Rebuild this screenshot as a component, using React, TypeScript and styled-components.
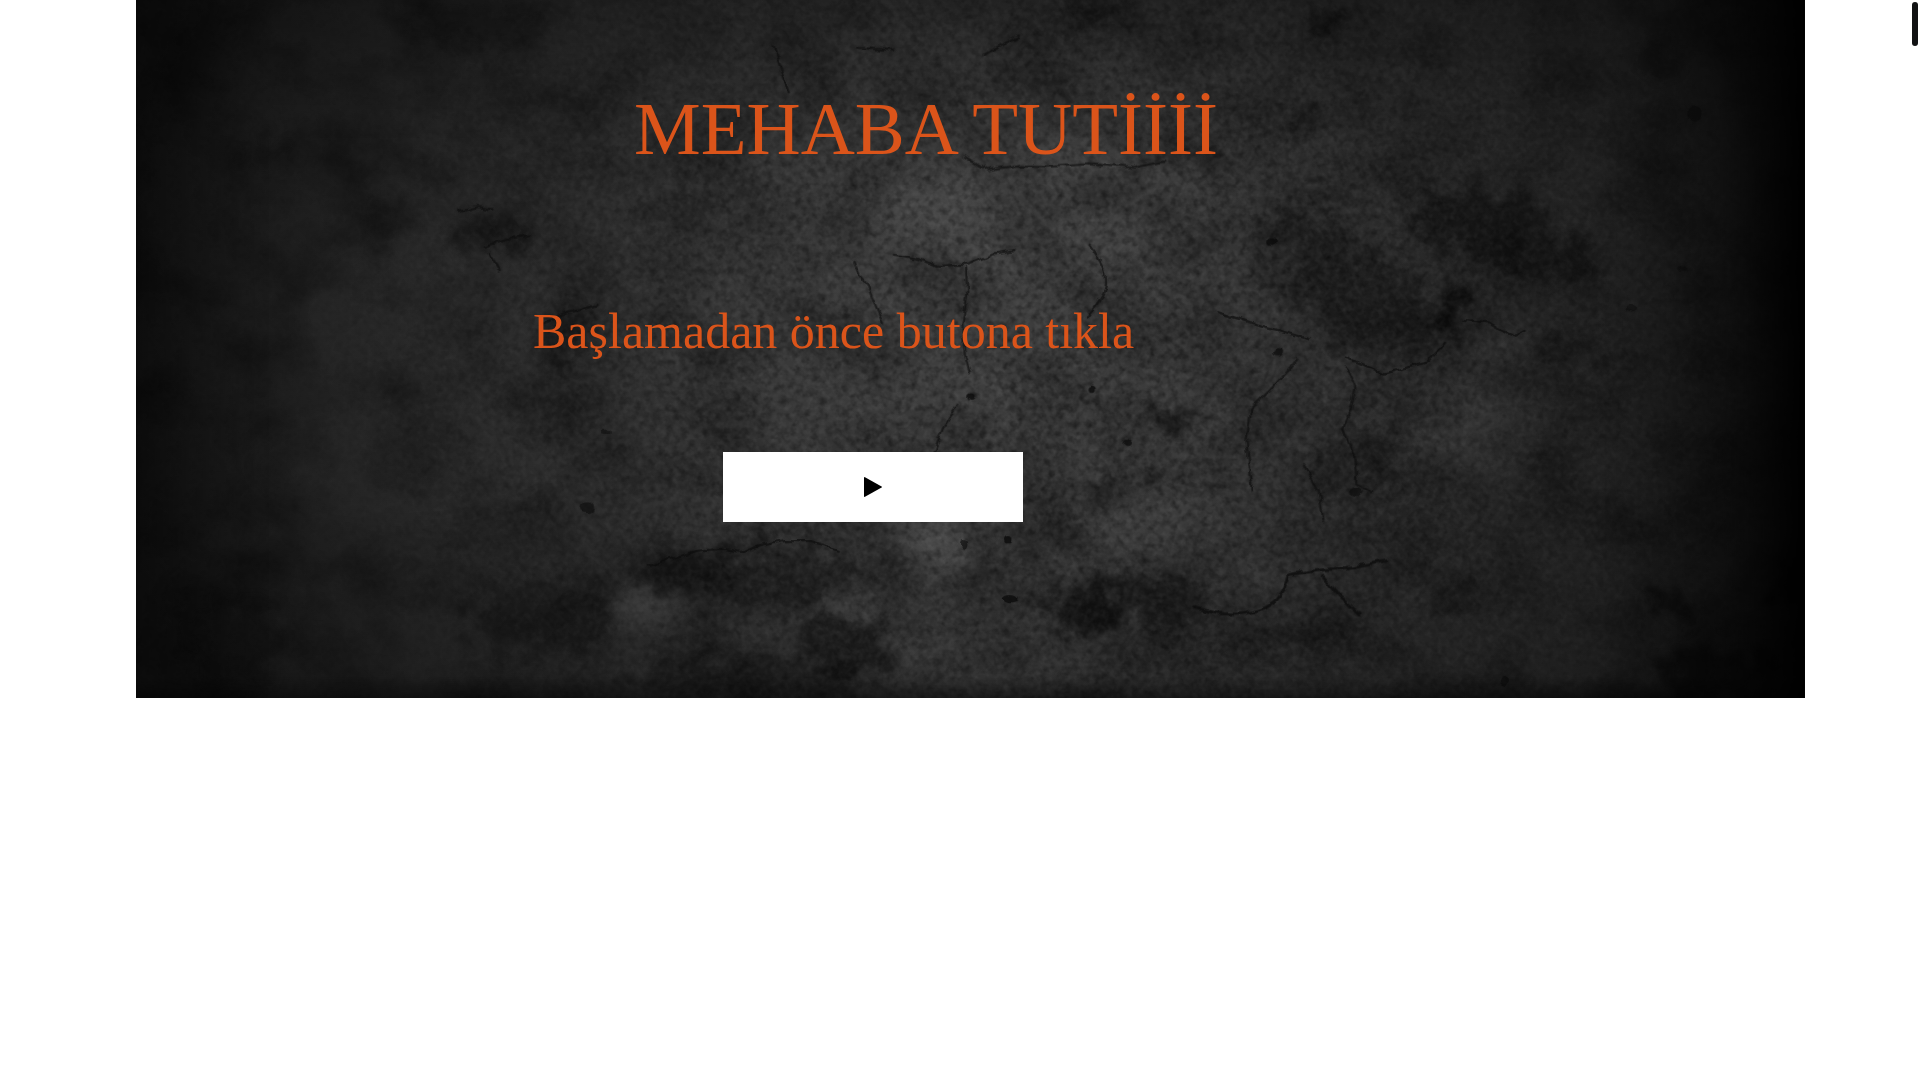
import React from "react";
import styled, { createGlobalStyle } from "styled-components";

const GlobalStyle = createGlobalStyle`
  * { box-sizing: border-box; }
  body {
    margin: 0;
    background: #fff;
    font-family: "Liberation Serif", "Times New Roman", serif;
  }
`;

const Page = styled.div`
  min-height: 100vh;
`;

const Hero = styled.main`
  position: relative;
  isolation: isolate;
  overflow: hidden;
  display: flex;
  flex-direction: column;
  align-items: flex-start;
  margin: 0 6% 0 136px;
  padding: 86px 0 176px;
  background: #1c1c1c;
`;

const Wall = styled.svg`
  position: absolute;
  inset: 0;
  z-index: -1;
  width: 100%;
  height: 100%;
`;

const Title = styled.h1`
  margin: 0 0 130px 498px;
  color: #db541a;
  font-size: 75px;
  font-weight: 400;
  line-height: 86px;
`;

const Lead = styled.p`
  margin: 0 0 92px 397px;
  color: #db541a;
  font-size: 50px;
  line-height: 58px;
`;

const PlayButton = styled.button`
  display: flex;
  align-items: center;
  justify-content: center;
  width: 300px;
  height: 70px;
  margin-left: 587px;
  padding: 0;
  border: 0;
  background: #fff;
  color: #000;
  cursor: pointer;
`;

const ScrollThumb = styled.div`
  position: fixed;
  top: 2px;
  right: 2px;
  width: 6px;
  height: 44px;
  border-radius: 3px;
  background: #111213;
`;

type Patch = [x: number, y: number, rx: number, ry: number, opacity: number];

const shadows: Patch[] = [
  [1205, 180, 55, 26, 0.5], [1260, 210, 36, 18, 0.5], [1183, 255, 11, 26, 0.75],
  [1060, 215, 40, 40, 0.25], [1120, 255, 45, 38, 0.35], [1100, 385, 40, 20, 0.2],
  [1128, 365, 16, 18, 0.35], [958, 343, 13, 9, 0.7], [935, 334, 10, 5, 0.5],
  [948, 386, 8, 3, 0.7], [905, 356, 9, 5, 0.35], [900, 403, 18, 8, 0.35],
  [885, 498, 28, 22, 0.6], [945, 490, 55, 17, 0.45], [620, 470, 90, 24, 0.35],
  [560, 465, 45, 20, 0.2], [440, 505, 60, 30, 0.3], [690, 530, 35, 25, 0.5],
  [610, 555, 90, 20, 0.35], [845, 435, 50, 16, 0.25], [555, 172, 30, 18, 0.25],
  [400, 190, 26, 16, 0.35], [318, 180, 20, 22, 0.3], [455, 275, 24, 20, 0.35],
  [1070, 97, 8, 9, 0.6], [1085, 15, 9, 9, 0.6], [895, 10, 25, 10, 0.4],
  [1188, 493, 16, 9, 0.5], [1360, 492, 20, 14, 0.65], [1459, 478, 12, 9, 0.8],
  [1400, 550, 50, 22, 0.65], [1280, 285, 28, 12, 0.4], [1355, 45, 12, 14, 0.4],
  [190, 525, 40, 35, 0.3], [220, 122, 16, 9, 0.3], [380, 15, 60, 16, 0.2],
  [965, 125, 40, 12, 0.3], [1030, 520, 80, 12, 0.2], [1050, 180, 18, 14, 0.35],
];

const highlights: Patch[] = [
  [702, 488, 24, 15, 0.12], [765, 452, 28, 24, 0.1], [527, 495, 30, 16, 0.08],
  [1205, 350, 50, 40, 0.06], [1220, 285, 24, 16, 0.06], [860, 170, 130, 60, 0.03],
  [950, 430, 55, 30, 0.04], [735, 520, 60, 28, 0.04], [1010, 475, 30, 16, 0.06],
  [350, 260, 110, 80, 0.02], [1125, 345, 10, 8, 0.08], [750, 170, 50, 30, 0.03],
  [330, 380, 130, 50, 0.02], [820, 540, 100, 20, 0.03],
];

const specks: Patch[] = [
  [793, 325, 3, 3, 0.8], [892, 318, 3, 3, 0.8], [480, 415, 5, 4, 0.6],
  [823, 440, 3, 3, 0.8], [825, 489, 6, 3, 0.8], [787, 445, 3, 4, 0.6],
  [1038, 197, 3, 3, 0.8], [920, 362, 3, 3, 0.7], [1043, 288, 4, 3, 0.7],
  [1108, 402, 5, 4, 0.6], [1332, 252, 5, 3, 0.4], [1384, 93, 6, 6, 0.5],
  [1374, 220, 4, 2, 0.5], [495, 353, 3, 2, 0.5], [1229, 556, 4, 4, 0.6],
];

const cracks = [
  "M730 208 Q748 210 766 217 L791 216 L810 208 L829 205",
  "M789 219 L790 240 L786 265 L788 290 L792 304",
  "M697 214 L702 225 L709 234 L714 248 L721 264",
  "M788 128 L806 139 L832 135 L860 136 L890 134 L925 137 L950 132",
  "M632 38 L640 62 L645 76",
  "M700 39 L730 41 M804 45 Q820 35 832 30",
  "M530 462 L568 450 L590 448 L607 451 L620 446 L640 442 L662 442 L685 449",
  "M762 370 L770 350 L782 331",
  "M890 200 Q910 225 900 242 L888 260",
  "M1022 333 L1038 318 L1060 293 M1022 333 L1018 360 L1023 400",
  "M1100 300 L1107 318 L1103 335 L1097 350 L1106 370 L1108 395 L1120 402",
  "M1065 380 L1077 400 L1081 426",
  "M1195 262 L1216 264 L1226 270 L1238 275 L1246 271",
  "M376 173 L390 169 L402 171 M396 202 L412 196 L432 193 M400 208 L408 220",
  "M440 266 L465 255 L488 249",
  "M995 255 L1020 263 L1045 270 L1068 277",
  "M1100 292 L1130 305 L1165 296 L1180 280",
];

const deepCracks = [
  "M975 496 Q1010 507 1033 496 Q1048 489 1053 469 L1075 466 L1105 463 L1132 458",
  "M1080 470 L1094 487 L1110 502",
];

const patches = (items: Patch[], fill: string) =>
  items.map(([x, y, rx, ry, opacity]) => (
    <ellipse key={`${x}-${y}`} cx={x} cy={y} rx={rx} ry={ry} fill={fill} opacity={opacity} />
  ));

function ConcreteWall() {
  return (
    <Wall viewBox="111 0 1363 570" preserveAspectRatio="none" aria-hidden="true">
      <defs>
        <radialGradient id="light" gradientUnits="userSpaceOnUse" cx="0" cy="0" r="1"
          gradientTransform="translate(800 275) scale(720 640)">
          <stop offset="0" stopColor="#404040" />
          <stop offset="0.25" stopColor="#383838" />
          <stop offset="0.5" stopColor="#292929" />
          <stop offset="0.75" stopColor="#202020" />
          <stop offset="1" stopColor="#131313" />
        </radialGradient>
        <linearGradient id="sides">
          <stop offset="0" stopColor="#000" stopOpacity="0.35" />
          <stop offset="0.08" stopColor="#000" stopOpacity="0" />
          <stop offset="0.88" stopColor="#000" stopOpacity="0" />
          <stop offset="0.95" stopColor="#000" stopOpacity="0.35" />
          <stop offset="1" stopColor="#000" stopOpacity="0.95" />
        </linearGradient>
        <linearGradient id="floor" x2="0" y2="1">
          <stop offset="0" stopColor="#000" stopOpacity="0.15" />
          <stop offset="0.2" stopColor="#000" stopOpacity="0" />
          <stop offset="0.97" stopColor="#000" stopOpacity="0" />
          <stop offset="1" stopColor="#000" stopOpacity="0.4" />
        </linearGradient>
        <radialGradient id="grainFade" gradientUnits="userSpaceOnUse" cx="0" cy="0" r="1"
          gradientTransform="translate(860 300) scale(620 480)">
          <stop offset="0" stopColor="#fff" />
          <stop offset="0.5" stopColor="#bbb" />
          <stop offset="1" stopColor="#222" />
        </radialGradient>
        <mask id="grainMask">
          <rect x="111" width="1363" height="570" fill="url(#grainFade)" />
        </mask>
        <filter id="rough" x="-10%" y="-10%" width="120%" height="120%" colorInterpolationFilters="sRGB">
          <feTurbulence type="fractalNoise" baseFrequency="0.06" numOctaves={5} seed={4} result="n" />
          <feDisplacementMap in="SourceGraphic" in2="n" scale="60" xChannelSelector="R" yChannelSelector="G" />
          <feGaussianBlur stdDeviation="3" />
        </filter>
        <filter id="soft" x="-10%" y="-10%" width="120%" height="120%">
          <feGaussianBlur stdDeviation="9" />
        </filter>
        <filter id="line" x="-10%" y="-10%" width="120%" height="120%" colorInterpolationFilters="sRGB">
          <feTurbulence type="fractalNoise" baseFrequency="0.1" numOctaves={2} seed={9} result="n" />
          <feDisplacementMap in="SourceGraphic" in2="n" scale="6" xChannelSelector="R" yChannelSelector="G" />
          <feGaussianBlur stdDeviation="0.6" />
        </filter>
        <filter id="grain" x="0" y="0" width="100%" height="100%" colorInterpolationFilters="sRGB">
          <feTurbulence type="fractalNoise" baseFrequency="0.16" numOctaves={3} seed={7} />
          <feColorMatrix values="0 0 0 0 0  0 0 0 0 0  0 0 0 0 0  1 0 0 0 -0.42" />
        </filter>
        <filter id="glint" x="0" y="0" width="100%" height="100%" colorInterpolationFilters="sRGB">
          <feTurbulence type="fractalNoise" baseFrequency="0.2" numOctaves={2} seed={21} />
          <feColorMatrix values="0 0 0 0 1  0 0 0 0 1  0 0 0 0 1  0.16 0 0 0 -0.06" />
        </filter>
        <filter id="cloud" x="0" y="0" width="100%" height="100%" colorInterpolationFilters="sRGB">
          <feTurbulence type="fractalNoise" baseFrequency="0.016 0.02" numOctaves={6} seed={12} />
          <feColorMatrix values="0 0 0 0 0  0 0 0 0 0  0 0 0 0 0  1.4 0 0 0 -0.55" />
        </filter>
      </defs>
      <rect x="111" width="1363" height="570" fill="url(#light)" />
      <g filter="url(#soft)">{patches(highlights, "#fff")}</g>
      <rect x="111" width="1363" height="570" filter="url(#cloud)" opacity="0.5" />
      <g filter="url(#rough)">{patches(shadows, "#070707")}</g>
      <g mask="url(#grainMask)">
        <rect x="111" width="1363" height="570" filter="url(#grain)" />
        <rect x="111" width="1363" height="570" filter="url(#glint)" />
      </g>
      <g filter="url(#line)">
        {patches(specks, "#0a0a0a")}
        <g fill="none" stroke="#0c0c0c" strokeLinecap="round" strokeLinejoin="round">
          {cracks.map((d) => <path key={d} d={d} strokeWidth="1.8" opacity="0.65" />)}
          {deepCracks.map((d) => <path key={d} d={d} strokeWidth="2.4" opacity="0.8" />)}
        </g>
      </g>
      <rect x="111" width="1363" height="570" fill="url(#sides)" />
      <rect x="111" width="1363" height="570" fill="url(#floor)" />
    </Wall>
  );
}

export default function App() {
  return (
    <Page>
      <GlobalStyle />
      <Hero>
        <ConcreteWall />
        <Title>MEHABA TUTİİİİ</Title>
        <Lead>Başlamadan önce butona tıkla</Lead>
        <PlayButton type="button" aria-label="Başlat">
          <svg width="18" height="20" viewBox="0 0 18 20" aria-hidden="true">
            <path d="M0 .8Q0-.3 1 .2L17.6 9.5Q18.4 10 17.6 10.5L1 19.8Q0 20.3 0 19.2Z" fill="currentColor" />
          </svg>
        </PlayButton>
      </Hero>
      <ScrollThumb />
    </Page>
  );
}
